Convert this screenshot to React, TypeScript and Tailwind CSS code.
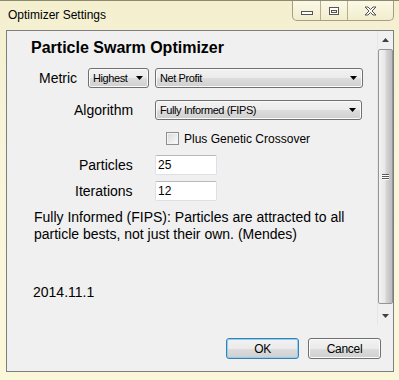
import React from "react";

const font = { fontFamily: '"Liberation Sans", Arial, sans-serif' };

function Arrow() {
  return (
    <svg width="7" height="4" viewBox="0 0 7 4" className="block">
      <path d="M0 0H7L3.5 4Z" fill="#000" />
    </svg>
  );
}

function Combo({ text, w }: { text: string; w: string }) {
  return (
    <div
      className={`${w} h-[20px] flex items-center justify-between rounded-[3px] border border-[#707070] bg-[linear-gradient(to_bottom,#f2f2f2_0%,#ebebeb_50%,#dddddd_50%,#cfcfcf_100%)] shadow-[inset_0_0_0_1px_#fbfbfb] pl-[4px] pr-[5px]`}
    >
      <span className="text-[11px] tracking-[-0.4px] leading-none text-black">{text}</span>
      <Arrow />
    </div>
  );
}

function TextBox({ value }: { value: string }) {
  return (
    <div className="w-[62px] h-[20px] flex items-center rounded-[2px] border border-[#dde0e6] border-t-[#b5b8be] bg-white pl-[2px]">
      <span className="text-[12px] leading-none text-black">{value}</span>
    </div>
  );
}

function Btn({ label, def }: { label: string; def?: boolean }) {
  return (
    <div
      className={`w-[73px] h-[21px] flex items-center justify-center rounded-[3px] border bg-[linear-gradient(to_bottom,#f2f2f2_0%,#ebebeb_50%,#dddddd_50%,#cfcfcf_100%)] ${
        def
          ? "border-[#3c7fb1] shadow-[inset_0_0_0_1px_#8ed0f3]"
          : "border-[#707070] shadow-[inset_0_0_0_1px_#fbfbfb]"
      }`}
    >
      <span className="text-[12px] tracking-[-0.3px] leading-none text-black">{label}</span>
    </div>
  );
}

function Scrollbar() {
  return (
    <div className="w-[16px] h-full flex flex-col bg-[#f0f0f0] border-l border-[#e6e6e6]">
      <div className="h-[18px] flex items-center justify-center">
        <svg width="7" height="4" viewBox="0 0 7 4">
          <path d="M0 4H7L3.5 0Z" fill="#404040" />
        </svg>
      </div>
      <div className="flex-1 flex">
        <div className="flex-1 mb-[3px] rounded-[2px] border border-[#959595] bg-[linear-gradient(to_right,#f3f3f3_0%,#e8e8e8_45%,#d6d6d6_55%,#bcbcbc_100%)] flex items-center justify-center">
          <div className="flex flex-col gap-[1px]">
            <div className="w-[7px] h-[1px] bg-[#5a5a5a] shadow-[0_1px_0_#fff]" />
            <div className="w-[7px] h-[1px] bg-[#5a5a5a] shadow-[0_1px_0_#fff]" />
            <div className="w-[7px] h-[1px] bg-[#5a5a5a] shadow-[0_1px_0_#fff]" />
          </div>
        </div>
      </div>
      <div className="h-[18px] flex items-center justify-center">
        <svg width="7" height="4" viewBox="0 0 7 4">
          <path d="M0 0H7L3.5 4Z" fill="#404040" />
        </svg>
      </div>
    </div>
  );
}

function CaptionButtons() {
  return (
    <div className="w-[102px] flex h-[20px] mr-[5px] rounded-b-[5px] border border-t-0 border-[#a39f86] bg-[linear-gradient(to_bottom,#fbf9e6,#f1edcc)] overflow-hidden">
      <div className="w-[28px] h-full flex items-end justify-center pb-[4px] border-r border-[#b3ae92]">
        <svg width="14" height="6" viewBox="0 0 14 6">
          <rect x="1.5" y="1.5" width="11" height="3" fill="#fff" stroke="#555" />
        </svg>
      </div>
      <div className="w-[27px] h-full flex items-center justify-center border-r border-[#b3ae92]">
        <svg width="12" height="10" viewBox="0 0 12 10">
          <rect x="1.5" y="1.5" width="9" height="7" fill="#fff" stroke="#555" />
          <rect x="3.5" y="4.5" width="5" height="2" fill="#f7f4dc" stroke="#555" />
        </svg>
      </div>
      <div className="flex-1 h-full flex items-center justify-center">
        <svg width="13" height="10" viewBox="0 0 13 10">
          <path
            d="M1 1H4L6.5 3.5L9 1H12L8 5L12 9H9L6.5 6.5L4 9H1L5 5Z"
            fill="#fff"
            stroke="#555"
            strokeWidth="1"
            strokeLinejoin="round"
          />
        </svg>
      </div>
    </div>
  );
}

export default function App() {
  return (
    <div
      style={font}
      className="w-[399px] h-[380px] flex flex-col bg-[linear-gradient(to_bottom,#f3efcf_0%,#f8f5da_40%,#fbf8da_100%)] overflow-hidden"
    >
      {/* title bar */}
      <div className="h-[30px] flex items-start border-t border-[#8e8a70]">
        <div className="flex-1 pl-[8px] pt-[7px] text-[12px] leading-[15px] text-black">Optimizer Settings</div>
        <CaptionButtons />
      </div>
      {/* client */}
      <div className="flex-1 flex pl-[6px] pr-[5px] pb-[8px]">
        <div className="flex-1 flex flex-col border border-[#7e7e7e] bg-[#f0f0f0]">
          <div className="h-[294px] flex">
            <div className="flex-1 flex flex-col text-black">
              <div className="pl-[24px] mt-[8px] text-[16px] font-bold leading-[18px]">Particle Swarm Optimizer</div>
              <div className="flex items-center h-[20px] mt-[11px] pl-[32px]">
                <span className="text-[14px] leading-none w-[49px]">Metric</span>
                <Combo text="Highest" w="w-[61px]" />
                <div className="w-[6px]" />
                <Combo text="Net Profit" w="w-[208px]" />
              </div>
              <div className="flex items-center h-[20px] mt-[12px] pl-[67px]">
                <span className="text-[14px] leading-none w-[81px]">Algorithm</span>
                <Combo text="Fully Informed (FIPS)" w="w-[207px]" />
              </div>
              <div className="flex items-center h-[13px] mt-[12px] pl-[159px]">
                <div className="w-[13px] h-[13px] border border-[#8e8f8f] bg-[linear-gradient(135deg,#d8d8d8,#fdfdfd)] shadow-[inset_0_0_0_1px_#f4f4f4]" />
                <span className="ml-[5px] text-[12px] leading-none">Plus Genetic Crossover</span>
              </div>
              <div className="flex items-center h-[20px] mt-[10px] pl-[72px]">
                <span className="text-[14px] leading-none w-[76px]">Particles</span>
                <TextBox value="25" />
              </div>
              <div className="flex items-center h-[20px] mt-[6px] pl-[68px]">
                <span className="text-[14px] leading-none w-[80px]">Iterations</span>
                <TextBox value="12" />
              </div>
              <div className="mt-[8px] pl-[27px] pr-[10px] text-[14px] leading-[17px]">
                Fully Informed (FIPS): Particles are attracted to all
                <br />
                particle bests, not just their own. (Mendes)
              </div>
              <div className="mt-[41px] pl-[26px] text-[14px] leading-[17px]">2014.11.1</div>
            </div>
            <Scrollbar />
          </div>
          <div className="flex justify-end gap-[9px] pt-[13px] pr-[12px]">
            <Btn label="OK" def />
            <Btn label="Cancel" />
          </div>
        </div>
      </div>
    </div>
  );
}
